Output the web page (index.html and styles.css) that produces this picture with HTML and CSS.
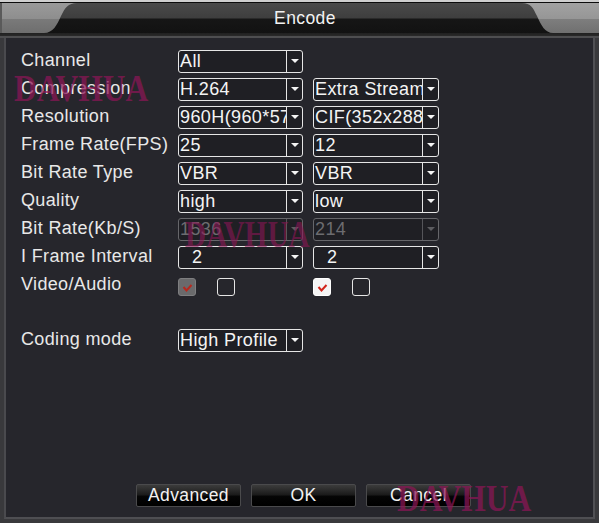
FILE: index.html
```html
<!DOCTYPE html>
<html>
<head>
<meta charset="utf-8">
<link rel="stylesheet" href="styles.css">
</head>
<body>
<div class="screen">
  <div class="topline"></div>
  <div class="titlebar">
    <svg class="corner corner-left" width="80" height="30" viewBox="0 0 80 30">
      <defs>
        <linearGradient id="gl" x1="0" y1="0" x2="0" y2="1">
          <stop offset="0" stop-color="#9a9a9a"/>
          <stop offset="0.52" stop-color="#8e8e8e"/>
          <stop offset="0.53" stop-color="#7a7a7a"/>
          <stop offset="1" stop-color="#6e6e6e"/>
        </linearGradient>
      </defs>
      <path d="M0,0 H77 C68,0 65,5 61,13 C57,22 53,30 44,30 H0 Z" fill="url(#gl)"/>
      <rect x="0" y="0" width="2" height="30" fill="#5a5a5a"/>
    </svg>
    <div class="title">Encode</div>
    <svg class="corner corner-right" width="77" height="30" viewBox="0 0 77 30">
      <defs>
        <linearGradient id="gr" x1="0" y1="0" x2="0" y2="1">
          <stop offset="0" stop-color="#a2a2a2"/>
          <stop offset="0.52" stop-color="#969696"/>
          <stop offset="0.53" stop-color="#7e7e7e"/>
          <stop offset="1" stop-color="#707070"/>
        </linearGradient>
      </defs>
      <path d="M77,0 H0 C9,0 11,5 15,13 C19,22 23,30 31,30 H77 Z" fill="url(#gr)"/>
    </svg>
  </div>
  <div class="sep"></div>
  <div class="frame">
    <div class="panel">
      <div class="form">
        <div class="label">Channel</div>
        <div class="sel"><span class="val">All</span><span class="arr"></span></div>
        <div></div>

        <div class="label">Compression</div>
        <div class="sel"><span class="val">H.264</span><span class="arr"></span></div>
        <div class="sel"><span class="val">Extra Stream</span><span class="arr"></span></div>

        <div class="label">Resolution</div>
        <div class="sel"><span class="val">960H(960*576)</span><span class="arr"></span></div>
        <div class="sel"><span class="val">CIF(352x288)</span><span class="arr"></span></div>

        <div class="label">Frame Rate(FPS)</div>
        <div class="sel"><span class="val">25</span><span class="arr"></span></div>
        <div class="sel"><span class="val">12</span><span class="arr"></span></div>

        <div class="label">Bit Rate Type</div>
        <div class="sel"><span class="val">VBR</span><span class="arr"></span></div>
        <div class="sel"><span class="val">VBR</span><span class="arr"></span></div>

        <div class="label">Quality</div>
        <div class="sel"><span class="val">high</span><span class="arr"></span></div>
        <div class="sel"><span class="val">low</span><span class="arr"></span></div>

        <div class="label">Bit Rate(Kb/S)</div>
        <div class="sel disabled"><span class="val">1536</span><span class="arr"></span></div>
        <div class="sel disabled"><span class="val">214</span><span class="arr"></span></div>

        <div class="label">I Frame Interval</div>
        <div class="sel"><span class="val indent">2</span><span class="arr"></span></div>
        <div class="sel"><span class="val indent">2</span><span class="arr"></span></div>

        <div class="label">Video/Audio</div>
        <div class="checks">
          <span class="cb checked-off"><svg width="15" height="15" viewBox="0 0 15 15"><polyline points="3.5,8 6.5,11.5 11.5,6" fill="none" stroke="#b8281e" stroke-width="2"/></svg></span>
          <span class="cb"></span>
        </div>
        <div class="checks">
          <span class="cb checked-on"><svg width="15" height="15" viewBox="0 0 15 15"><polyline points="3.5,8 6.5,11.5 11.5,6" fill="none" stroke="#d2231a" stroke-width="2"/></svg></span>
          <span class="cb"></span>
        </div>
      </div>

      <div class="form coding">
        <div class="label">Coding mode</div>
        <div class="sel"><span class="val">High Profile</span><span class="arr"></span></div>
        <div></div>
      </div>

      <div class="spacer"></div>

      <div class="buttons">
        <div class="btn">Advanced</div>
        <div class="btn">OK</div>
        <div class="btn">Cancel</div>
      </div>
    </div>
  </div>
  <div class="wm wm1">DAVHUA</div>
  <div class="wm wm2">DAVHUA</div>
  <div class="wm wm3">DAVHUA</div>
</div>
</body>
</html>
```

FILE: styles.css
```css
html, body {
  margin: 0;
  padding: 0;
  background: #2e2e30;
}

.screen {
  position: relative;
  width: 599px;
  height: 523px;
  overflow: hidden;
  background: #333336;
  font-family: "Liberation Sans", Arial, sans-serif;
  color: #ececec;
}

.topline {
  height: 3px;
  background: linear-gradient(#cfcfcf 0, #cfcfcf 2px, #0c0c0c 2px);
}

.titlebar {
  display: flex;
  height: 30px;
  background: linear-gradient(#4a4a4a 0, #3e3e3e 15px, #161616 16px, #121212 30px);
}

.corner {
  display: block;
  flex: none;
}

.title {
  flex: 1;
  text-align: center;
  font-size: 17.5px;
  line-height: 30px;
  letter-spacing: 0.4px;
  padding-left: 8px;
  color: #f2f2f2;
}

.sep {
  height: 5px;
  background: linear-gradient(#202020 0, #2a2a2a 3px, #4e4e50 3px, #4e4e50 5px);
}

.frame {
  height: 485px;
  box-sizing: border-box;
  padding: 0 4px 4px 4px;
  background: #39393c;
  display: flex;
}

.panel {
  flex: 1;
  display: flex;
  flex-direction: column;
  background: #26262c;
  border-left: 2px solid #4a4a4e;
  border-right: 2px solid #505054;
  border-bottom: 2px solid #4e4e52;
  padding: 12px 0 10px 15px;
}

.form {
  display: grid;
  grid-template-columns: 147px 125px 126px;
  column-gap: 10px;
  grid-auto-rows: 23px;
  row-gap: 5px;
}

.coding {
  margin-top: 32px;
}

.label {
  font-size: 18px;
  line-height: 21px;
  letter-spacing: 0.35px;
  color: #e8e8e8;
  white-space: nowrap;
}

.sel {
  display: flex;
  height: 23px;
  box-sizing: border-box;
  border: 1.5px solid #e6e6e6;
  border-radius: 3px;
  background: #1f1f24;
  overflow: hidden;
}

.val {
  flex: 1;
  min-width: 0;
  overflow: hidden;
  white-space: nowrap;
  padding-left: 1px;
  font-size: 18px;
  line-height: 20px;
  letter-spacing: 0.4px;
  color: #f4f4f4;
}

.val.indent {
  padding-left: 13px;
}

.arr {
  flex: none;
  width: 15px;
  border-left: 1.5px solid #e6e6e6;
  display: flex;
  align-items: center;
  justify-content: center;
}

.arr::after {
  content: "";
  width: 0;
  height: 0;
  border-left: 4px solid transparent;
  border-right: 4px solid transparent;
  border-top: 4px solid #f4f4f4;
  margin-top: -2px;
}

.sel.disabled {
  border-color: #66666a;
}

.sel.disabled .val {
  color: #6c6c70;
}

.sel.disabled .arr {
  border-left-color: #55555a;
}

.sel.disabled .arr::after {
  border-top-color: #5c5c60;
}

.checks {
  display: flex;
  align-items: center;
  gap: 21px;
  padding-top: 2px;
}

.cb {
  width: 18px;
  height: 18px;
  box-sizing: border-box;
  border: 1.5px solid #e6e6e6;
  border-radius: 3px;
  display: flex;
  align-items: center;
  justify-content: center;
}

.cb svg {
  display: block;
}

.cb.checked-off {
  background: #6a6a6c;
  border-color: #7e7e80;
}

.cb.checked-on {
  background: #f4f4f4;
  border-color: #ffffff;
}

.spacer {
  flex: 1;
}

.buttons {
  display: flex;
  gap: 10px;
  margin-left: 115px;
}

.btn {
  width: 105px;
  height: 23px;
  box-sizing: border-box;
  border: 1px solid #4a4a4c;
  border-radius: 2px;
  background: linear-gradient(#3c3c3c 0, #1c1c1c 45%, #050505 55%, #000 100%);
  color: #f2f2f2;
  font-size: 17.5px;
  line-height: 21px;
  letter-spacing: 0.4px;
  text-align: center;
}

.wm {
  position: absolute;
  font-family: "Liberation Serif", "Times New Roman", serif;
  font-weight: bold;
  font-size: 38px;
  line-height: 38px;
  color: rgba(140, 22, 86, 0.72);
  transform: scaleX(0.83);
  transform-origin: left top;
  white-space: nowrap;
  pointer-events: none;
}

.wm1 { left: 14px; top: 69px; }
.wm2 { left: 185px; top: 215px; transform: scaleX(0.77); color: rgba(140, 22, 86, 0.62); }
.wm3 { left: 397px; top: 479px; }
```
